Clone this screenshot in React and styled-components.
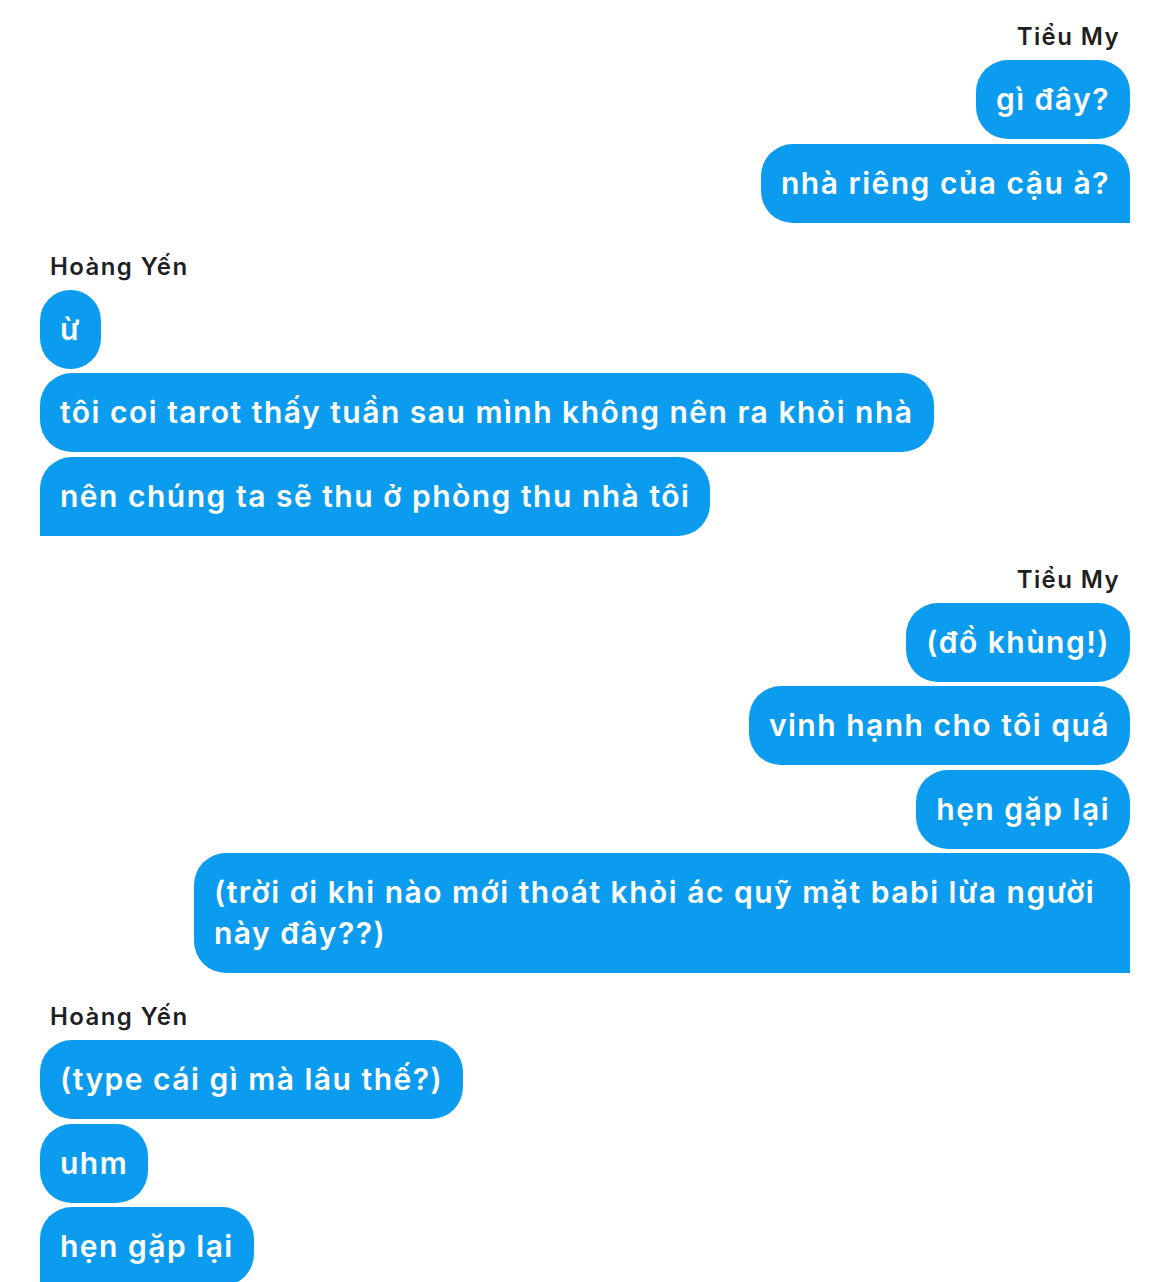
import React from "react";
import styled, { createGlobalStyle } from "styled-components";

const GlobalStyle = createGlobalStyle`
  html, body {
    margin: 0;
    padding: 0;
    background: #ffffff;
  }
  body {
    font-family: "Inter", "Noto Sans", sans-serif;
  }
`;

const ChatContainer = styled.div`
  display: flex;
  flex-direction: column;
  padding: 22px 40px 0;
`;

const Group = styled.section`
  display: flex;
  flex-direction: column;
  align-items: ${(p) => (p.mine ? "flex-end" : "flex-start")};
  gap: 4.33px;
  margin-bottom: 29px;
`;

const SenderName = styled.div`
  font-size: 24px;
  font-weight: 600;
  letter-spacing: 1.4px;
  line-height: 30px;
  color: #1f1f1f;
  padding: 0 10px;
  margin-bottom: 4px;
`;

const Bubble = styled.div`
  box-sizing: border-box;
  max-width: 936px;
  padding: 19px 20px;
  background: #0b9cf0;
  color: #ffffff;
  font-size: 30px;
  font-weight: 600;
  letter-spacing: 1.5px;
  line-height: 41px;
  border-radius: 32px;
  ${(p) =>
    p.last && p.mine ? "border-bottom-right-radius: 0;" : ""}
  ${(p) =>
    p.last && !p.mine ? "border-bottom-left-radius: 0;" : ""}
`;

const messages = [
  { sender: "Tiểu My", mine: true, texts: ["gì đây?", "nhà riêng của cậu à?"] },
  {
    sender: "Hoàng Yến",
    mine: false,
    texts: [
      "ừ",
      "tôi coi tarot thấy tuần sau mình không nên ra khỏi nhà",
      "nên chúng ta sẽ thu ở phòng thu nhà tôi",
    ],
  },
  {
    sender: "Tiểu My",
    mine: true,
    texts: [
      "(đồ khùng!)",
      "vinh hạnh cho tôi quá",
      "hẹn gặp lại",
      "(trời ơi khi nào mới thoát khỏi ác quỹ mặt babi lừa người này đây??)",
    ],
  },
  {
    sender: "Hoàng Yến",
    mine: false,
    texts: ["(type cái gì mà lâu thế?)", "uhm", "hẹn gặp lại"],
  },
];

export default function App() {
  return (
    <>
      <GlobalStyle />
      <ChatContainer>
        {messages.map((group, i) => (
          <Group key={i} mine={group.mine}>
            <SenderName>{group.sender}</SenderName>
            {group.texts.map((text, j) => (
              <Bubble
                key={j}
                mine={group.mine}
                last={j === group.texts.length - 1}
              >
                {text}
              </Bubble>
            ))}
          </Group>
        ))}
      </ChatContainer>
    </>
  );
}
